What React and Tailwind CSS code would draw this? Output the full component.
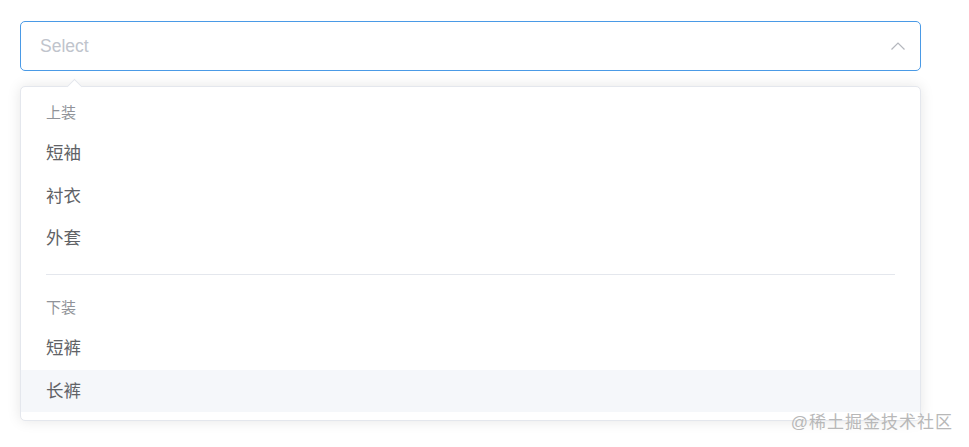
const groups = [
    { label: "上装", options: ["短袖", "衬衣", "外套"] },
    { label: "下装", options: ["短裤", "长裤"] },
]

const cjk = "font-['Liberation_Sans','Noto_Sans_CJK_SC',sans-serif]"

const App = () => {
    const hovered = "长裤"

    return (
        <div className={`relative w-[969px] h-[447px] bg-white overflow-hidden ${cjk}`}>
            <div className="flex flex-col gap-[15px] pt-[21px] pl-[20px] w-[921px]">
                {/* select trigger */}
                <div className="flex items-center justify-between h-[50px] border border-[#4a9ae6] rounded-[5px] pl-[19px] pr-[14px]">
                    <span className="text-[17.5px] text-[#c0c4cc]">Select</span>
                    <svg width="16" height="10" viewBox="0 0 16 10" fill="none">
                        <path d="M1.5 8.5 L8 2 L14.5 8.5" stroke="#b4b7bd" strokeWidth="1.2" />
                    </svg>
                </div>

                {/* dropdown */}
                <div className="relative bg-white border border-[#e4e7ed] rounded-[5px] shadow-[0_0_14px_rgba(0,0,0,0.10)]">
                    <div className="absolute -top-[6px] left-[48px] w-[11px] h-[11px] rotate-45 bg-white border-t border-l border-[#e4e7ed]"></div>
                    <div className="relative flex flex-col py-[7.5px]">
                        {groups.map((group, gi) => (
                            <div key={gi} className="flex flex-col">
                                <div className="h-[37.5px] flex items-center pl-[25px] text-[15px] text-[#909399]">
                                    {group.label}
                                </div>
                                {group.options.map((opt) => (
                                    <div key={opt}
                                         className={`h-[42.5px] flex items-center pl-[25px] text-[17.5px] text-[#606266] ${opt === hovered ? "bg-[#f5f7fa]" : ""}`}
                                    >
                                        {opt}
                                    </div>
                                ))}
                                {gi < groups.length - 1 && (
                                    <div className="mx-[25px] my-[14.5px] h-px bg-[#e4e7ed]"></div>
                                )}
                            </div>
                        ))}
                    </div>
                </div>
            </div>

            {/* watermark */}
            <div className="absolute right-[16px] top-[410px] text-[17px] text-[#b8b8b8] tracking-[1px]">
                @稀土掘金技术社区
            </div>
        </div>
    )
}

export default App
